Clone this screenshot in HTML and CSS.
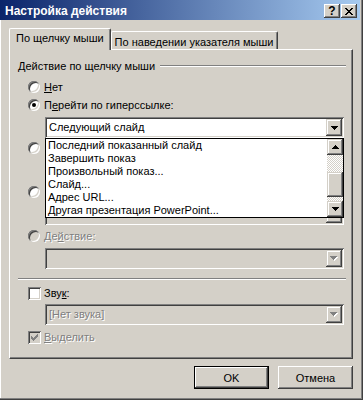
FILE: index.html
```html
<!DOCTYPE html>
<html>
<head>
<meta charset="UTF-8">
<title>Настройка действия</title>
<link rel="stylesheet" href="styles.css">
</head>
<body>
<div class="window">
	<!-- заголовок окна -->
	<div class="titlebar">
		<span class="title">Настройка действия</span>
		<span class="cap-btn help">?</span>
		<span class="cap-btn"><svg width="8" height="7" viewBox="0 0 8 7"><path d="M0 0h2v1h-2z M6 0h2v1h-2z M1 1h2v1h-2z M5 1h2v1h-2z M2 2h4v1h-4z M3 3h2v1h-2z M2 4h4v1h-4z M1 5h2v1h-2z M5 5h2v1h-2z M0 6h2v1h-2z M6 6h2v1h-2z" fill="#000"/></svg></span>
	</div>
	<div class="client">
		<div class="tabs">
			<div class="tab active">По щелчку мыши</div>
			<div class="tab">По наведении указателя мыши</div>
		</div>
		<div class="panel">
			<div class="group-head"><span>Действие по щелчку мыши</span><i class="etch"></i></div>

			<div class="opt first"><span class="radio"></span><span><u>Н</u>ет</span></div>
			<div class="opt tight"><span class="radio checked"></span><span>П<u>е</u>рейти по гиперссылке:</span></div>
			<div class="combo">
				<span class="combo-text">Следующий слайд</span>
				<span class="drop-btn"><svg width="7" height="4" viewBox="0 0 7 4"><path d="M0 0h7v1h-1v1h-1v1h-1v1h-1v-1h-1v-1h-1v-1h-1z" fill="#000"/></svg></span>
				<!-- раскрытый список -->
				<div class="droplist">
					<ul class="items">
						<li>Последний показанный слайд</li>
						<li>Завершить показ</li>
						<li>Произвольный показ...</li>
						<li>Слайд...</li>
						<li>Адрес URL...</li>
						<li>Другая презентация PowerPoint...</li>
					</ul>
					<div class="scrollbar">
						<span class="sb-btn"><svg width="7" height="4" viewBox="0 0 7 4"><path d="M3 0h1v1h1v1h1v1h1v1h-7v-1h1v-1h1v-1h1z" fill="#000"/></svg></span>
						<div class="sb-track"><div class="sb-thumb"></div></div>
						<span class="sb-btn"><svg width="7" height="4" viewBox="0 0 7 4"><path d="M0 0h7v1h-1v1h-1v1h-1v1h-1v-1h-1v-1h-1v-1h-1z" fill="#000"/></svg></span>
					</div>
				</div>
			</div>

			<!-- эти строки закрыты списком -->
			<div class="opt after-combo"><span class="radio"></span></div>
			<div class="textbox"></div>

			<div class="opt"><span class="radio"></span></div>
			<div class="combo off">
				<span class="combo-text"></span>
				<span class="drop-btn"><svg width="8" height="5" viewBox="0 0 8 5"><path d="M1 1h7v1h-1v1h-1v1h-1v1h-1v-1h-1v-1h-1v-1h-1z" fill="#fff"/><path d="M0 0h7v1h-1v1h-1v1h-1v1h-1v-1h-1v-1h-1v-1h-1z" fill="#808080"/></svg></span>
			</div>

			<div class="opt disabled"><span class="radio off"></span><span class="lbl">Де<u>й</u>ствие:</span></div>
			<div class="combo off">
				<span class="combo-text"></span>
				<span class="drop-btn"><svg width="8" height="5" viewBox="0 0 8 5"><path d="M1 1h7v1h-1v1h-1v1h-1v1h-1v-1h-1v-1h-1v-1h-1z" fill="#fff"/><path d="M0 0h7v1h-1v1h-1v1h-1v1h-1v-1h-1v-1h-1v-1h-1z" fill="#808080"/></svg></span>
			</div>

			<div class="sep"></div>

			<div class="opt after-sep"><span class="check"></span><span>Зву<u>к</u>:</span></div>
			<div class="combo off near">
				<span class="combo-text lbl">[Нет звука]</span>
				<span class="drop-btn"><svg width="8" height="5" viewBox="0 0 8 5"><path d="M1 1h7v1h-1v1h-1v1h-1v1h-1v-1h-1v-1h-1v-1h-1z" fill="#fff"/><path d="M0 0h7v1h-1v1h-1v1h-1v1h-1v-1h-1v-1h-1v-1h-1z" fill="#808080"/></svg></span>
			</div>
			<div class="opt disabled last"><span class="check off"><svg width="7" height="7" viewBox="0 0 7 7"><path d="M0 2h1v3h-1z M1 3h1v3h-1z M2 4h1v3h-1z M3 3h1v3h-1z M4 2h1v3h-1z M5 1h1v3h-1z M6 0h1v3h-1z" fill="#808080"/></svg></span><span class="lbl"><u>В</u>ыделить</span></div>
		</div>
		<div class="buttons">
			<div class="btn default">OK</div>
			<div class="btn">Отмена</div>
		</div>
	</div>
</div>
</body>
</html>
```

FILE: styles.css
```css
*{
	box-sizing: border-box;
}
body{
	margin: 0;
	background: #d4d0c8;
	font-family: "Liberation Sans", Arial, sans-serif;
	font-size: 11px;
	color: #000;
}
u{
	text-decoration: underline;
	text-underline-offset: 1px;
}
.window{
	width: 363px;
	height: 400px;
	background: #d4d0c8;
	box-shadow: inset -1px -1px 0 #404040, inset -2px -2px 0 #808080, inset 1px 0 0 #fff;
}
/* заголовок */
.titlebar{
	width: 360px;
	height: 20px;
	display: flex;
	align-items: flex-start;
	padding: 0 3px 0 4px;
	background: linear-gradient(to right, #0a246a, #a6caf0);
}
.title{
	flex: 1;
	margin-top: 4px;
	padding-left: 1px;
	color: #fff;
	font-weight: bold;
	font-size: 12px;
	line-height: 14px;
}
.cap-btn{
	width: 16px;
	height: 14px;
	margin-top: 4px;
	display: flex;
	align-items: center;
	justify-content: center;
	background: #d4d0c8;
	box-shadow: inset -1px -1px #404040, inset 1px 1px #fff, inset -2px -2px #808080;
	font-weight: bold;
	font-size: 12px;
	line-height: 14px;
}
.help{
	margin-right: 1px;
}
.client{
	padding: 8px 10px 0 9px;
}
/* вкладки */
.tabs{
	display: flex;
	align-items: flex-end;
	height: 21px;
}
.tab{
	height: 18px;
	padding: 3px 4px 0 3px;
	line-height: 14px;
	white-space: nowrap;
	border-top: 1px solid #fff;
	border-left: 1px solid #fff;
	border-right: 1px solid #404040;
	border-radius: 2px 2px 0 0;
	box-shadow: inset -1px 0 #808080;
}
.tab.active{
	position: relative;
	z-index: 1;
	height: 22px;
	margin-bottom: -1px;
	padding: 2px 6px 0 6px;
	background: #d4d0c8;
}
.panel{
	height: 310px;
	padding: 9px 6px 0 8px;
	border-top: 1px solid #fff;
	border-left: 1px solid #fff;
	border-right: 1px solid #404040;
	border-bottom: 1px solid #404040;
	box-shadow: inset -1px -1px #808080;
}
.group-head{
	display: flex;
	align-items: center;
	height: 14px;
	line-height: 14px;
	white-space: nowrap;
}
.etch, .sep{
	height: 2px;
	border-top: 1px solid #808080;
	border-bottom: 1px solid #fff;
}
.etch{
	flex: 1;
	margin-left: 5px;
}
.sep{
	margin-top: 9px;
}
/* переключатели и флажки */
.opt{
	display: flex;
	align-items: center;
	height: 18px;
	margin-top: 2px;
	padding-left: 10px;
	line-height: 14px;
	white-space: nowrap;
}
.opt.first{ margin-top: 5px; }
.opt.tight{ margin-top: 0; }
.opt.after-combo{ margin-top: 1px; }
.opt.after-sep{ margin-top: 4px; }
.opt.last{ margin-top: 3px; }
.radio{
	width: 12px;
	height: 12px;
	margin-right: 4px;
	border-radius: 50%;
	background: #fff;
	box-shadow: inset 1px 1px #808080, inset -1px -1px #fff, inset 2px 2px #404040, inset -2px -2px #d4d0c8;
}
.radio.checked{
	display: flex;
	align-items: center;
	justify-content: center;
}
.radio.checked::after{
	content: "";
	width: 4px;
	height: 4px;
	border-radius: 50%;
	background: #000;
}
.radio.off, .check.off{
	background: #d4d0c8;
}
.check{
	width: 13px;
	height: 13px;
	margin-right: 3px;
	display: flex;
	align-items: center;
	justify-content: center;
	background: #fff;
	box-shadow: inset 1px 1px #808080, inset -1px -1px #fff, inset 2px 2px #404040, inset -2px -2px #d4d0c8;
}
.lbl{
	color: #808080;
	text-shadow: 1px 1px #fff;
}
/* поля */
.combo, .textbox{
	position: relative;
	width: 299px;
	height: 21px;
	margin: 3px 0 0 27px;
	background: #fff;
	box-shadow: inset 1px 1px #808080, inset -1px -1px #fff, inset 2px 2px #404040, inset -2px -2px #d4d0c8;
}
.combo{
	display: flex;
	padding: 2px;
}
.combo.off{
	background: #d4d0c8;
}
.combo.near{
	margin-top: 2px;
}
.combo-text{
	flex: 1;
	padding-left: 2px;
	line-height: 17px;
	white-space: nowrap;
}
.drop-btn, .sb-btn{
	display: flex;
	align-items: center;
	justify-content: center;
	width: 16px;
	height: 17px;
	background: #d4d0c8;
	box-shadow: inset -1px -1px #404040, inset 1px 1px #d4d0c8, inset -2px -2px #808080, inset 2px 2px #fff;
}
.droplist{
	position: absolute;
	z-index: 2;
	top: 21px;
	left: 0;
	width: 299px;
	height: 80px;
	display: flex;
	border: 1px solid #000;
	background: #fff;
}
.items{
	flex: 1;
	margin: 0;
	padding: 0;
	list-style: none;
}
.items li{
	height: 13px;
	padding-left: 2px;
	line-height: 13px;
	white-space: nowrap;
	overflow: hidden;
}
.scrollbar{
	width: 16px;
	display: flex;
	flex-direction: column;
}
.sb-btn{
	height: 16px;
}
.sb-track{
	flex: 1;
	padding-top: 17px;
	background: repeating-conic-gradient(#fff 0 25%, #d4d0c8 0 50%) 0 0 / 2px 2px;
}
.sb-thumb{
	height: 25px;
	background: #d4d0c8;
	box-shadow: inset -1px -1px #404040, inset 1px 1px #d4d0c8, inset -2px -2px #808080, inset 2px 2px #fff;
}
/* кнопки */
.buttons{
	display: flex;
	justify-content: flex-end;
	gap: 9px;
	margin-top: 7px;
}
.btn{
	width: 75px;
	height: 23px;
	display: flex;
	align-items: center;
	justify-content: center;
	background: #d4d0c8;
	box-shadow: inset -1px -1px #404040, inset 1px 1px #fff, inset -2px -2px #808080;
}
.btn.default{
	border: 1px solid #000;
}
```
